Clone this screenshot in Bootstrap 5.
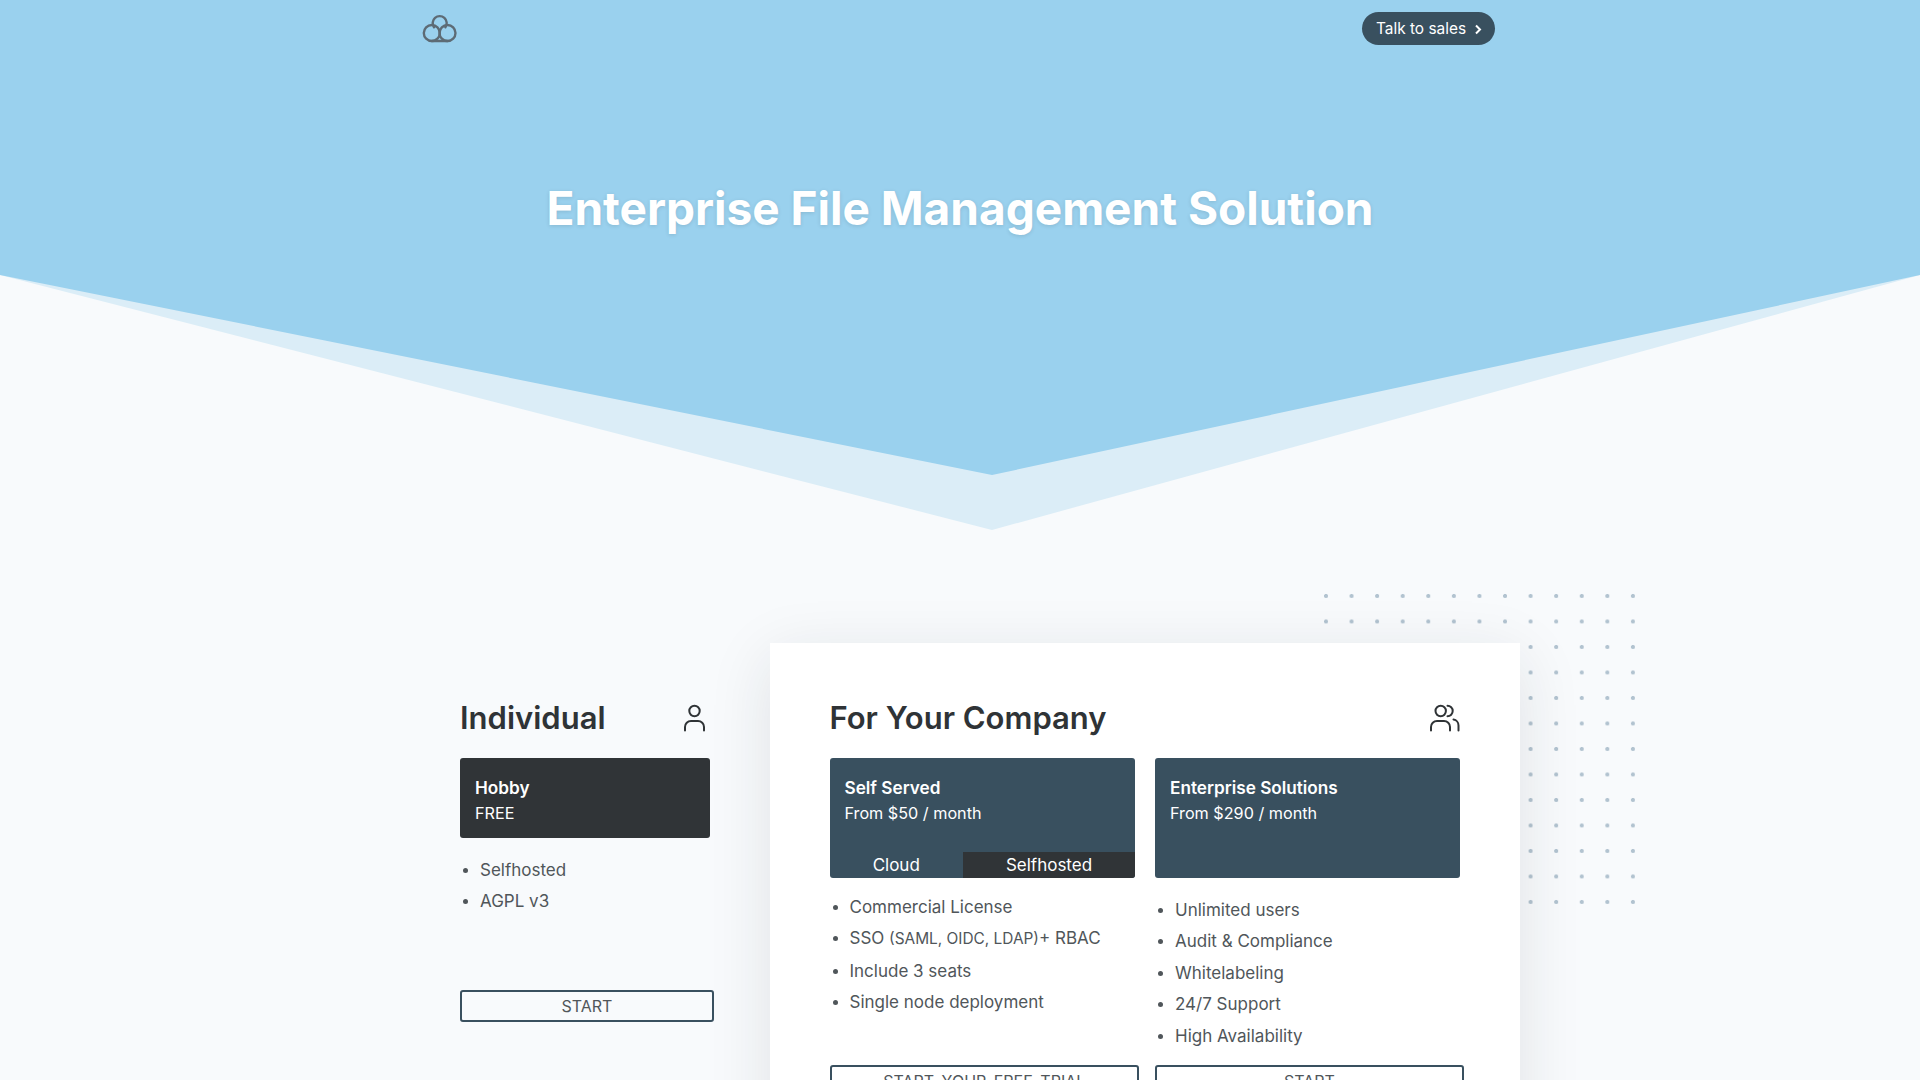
<!DOCTYPE html>
<html lang="en">
<head>
    <meta charset="UTF-8">
    <title>Enterprise File Management Solution</title>
    <link href="https://cdn.jsdelivr.net/npm/bootstrap@5.3.0/dist/css/bootstrap.min.css" rel="stylesheet">
    <style>
        body { background: #f8fafc; font-family: Inter, "Liberation Sans", sans-serif; color: #50565a; }
        .hero-wrap { height: 530px; }
        .hero-bg { position: absolute; top: 0; left: 0; width: 100%; height: 100%; }
        .hero-nav { width: 1073px; margin-left: 422px; padding-top: 12px; height: 45px; }
        .sales-btn { background: #39505f; color: #fff; font-size: 15.4px; height: 33px; padding: 1px 13px 0 14px; }
        .sales-btn:hover { background: #39505f; color: #fff; }
        .hero-title { color: #fff; font-size: 46px; font-weight: 700; margin: 0; padding-top: 136px; text-shadow: 0 1px 4px rgba(0, 0, 0, .12); }
        .plans-wrap { width: 1060px; margin-left: 460px; padding-top: 113px; }
        .dot-field { position: absolute; left: 1323px; top: 593px; width: 312px; height: 312px; background-image: radial-gradient(circle at 3px 3px, #b2c3d0 1.8px, transparent 2.3px); background-size: 25.58px 25.5px; }
        .solo-col { width: 250px; padding-top: 56px; }
        .company-panel { width: 750px; margin-left: 60px; padding: 56px 60px 30px 59.5px; box-shadow: 0 14px 60px rgba(30, 40, 50, .11); }
        .plan-head { height: 38px; margin-bottom: 21px; }
        .plan-head h2 { font-size: 31px; font-weight: 600; color: #2f3336; margin: 0; line-height: 38px; }
        .plan-head svg { fill: none; stroke: #2f3336; stroke-width: 2; stroke-linecap: round; }
        .plan-box { background: #39505f; color: #fff; font-size: 16.2px; line-height: 26px; padding: 17px 15px 12px; border-radius: 3px; }
        .plan-box b { font-size: 17.2px; font-weight: 600; display: block; margin-bottom: -1px; }
        .plan-box.dark { background: #303437; height: 80px; }
        .tall-box { height: 120px; }
        .tab-row { height: 26px; margin: auto -15px -12px; font-size: 17px; line-height: 26px; text-align: center; }
        .tab-cloud { width: 133.5px; }
        .tab-self { width: 172px; background: #303437; border-radius: 0 0 3px 0; }
        .plan-list { padding-left: 20px; margin: 0; font-size: 17px; line-height: 24px; }
        .plan-list li { margin-bottom: 7.4px; }
        .plan-list li::marker { font-size: 15px; }
        .plan-list small { font-size: 15.4px; }
        .plan-btn { display: block; width: calc(100% + 4px); height: 32px; padding: 0; font-size: 16px; line-height: 28px; word-spacing: 3px; color: #50565a; border: 2px solid #39505f; border-radius: 3px; background: transparent; }
        .solo-start { margin-top: 77px; }
        .split-row { gap: 20px; padding-bottom: 40px; }
        .col-split { width: 305.5px; }
        .top-list { margin-top: 17px; }
        .ent-list { margin-top: 20px; margin-bottom: 10px; }
    </style>
</head>
<body>
    <div class="position-relative hero-wrap">
        <svg class="hero-bg" viewBox="0 0 1920 530" preserveAspectRatio="none" aria-hidden="true">
            <polygon points="0,275 992,530 1920,275 1920,275" fill="#dbedf7"/>
            <polygon points="0,0 1920,0 1920,275 992,475 0,275" fill="#9ad1ee"/>
        </svg>
        <div class="position-relative">
            <div class="hero-nav d-flex justify-content-between align-items-start">
                <svg width="36" height="32" viewBox="0 0 36 32" fill="none" stroke="#5d6b75" stroke-width="2.4" stroke-linecap="round">
                    <circle cx="9.8" cy="21" r="8"/>
                    <circle cx="25.5" cy="21" r="8"/>
                    <path d="M12 15.2A7 7 0 1 1 23.4 15.2"/>
                    <path d="M9.8 29H25.5"/>
                </svg>
                <a href="#" class="btn sales-btn rounded-pill d-flex align-items-center gap-2 border-0">
                    Talk to sales
                    <svg width="8" height="11" viewBox="0 0 8 11" fill="none" stroke="#fff" stroke-width="2"><path d="M2 1.5 6 5.5 2 9.5"/></svg>
                </a>
            </div>
            <h1 class="hero-title text-center">Enterprise File Management Solution</h1>
        </div>
    </div>

    <div class="dot-field"></div>

    <div class="plans-wrap d-flex position-relative align-items-start">
        <div class="solo-col">
            <div class="plan-head d-flex justify-content-between align-items-center">
                <h2>Individual</h2>
                <svg width="27" height="28" viewBox="0 0 27 28">
                    <circle cx="11.5" cy="7" r="5.2"/>
                    <path d="M2 26.5V23a6 6 0 0 1 6-6h7a6 6 0 0 1 6 6v3.5"/>
                </svg>
            </div>
            <div class="plan-box dark">
                <b>Hobby</b>
                FREE
            </div>
            <ul class="plan-list mt-3 pt-1">
                <li>Selfhosted</li>
                <li>AGPL v3</li>
            </ul>
            <a href="#" class="btn plan-btn solo-start">START</a>
        </div>

        <div class="card company-panel border-0 rounded-0 bg-white">
            <div class="plan-head d-flex justify-content-between align-items-center">
                <h2>For Your Company</h2>
                <svg width="31" height="28" viewBox="0 0 31 28">
                    <circle cx="11.7" cy="7" r="5.2"/>
                    <path d="M18.5 1.8a5.2 5.2 0 0 1 0 10.4"/>
                    <path d="M2 26.5V23a6 6 0 0 1 6-6h7a6 6 0 0 1 6 6v3.5"/>
                    <path d="M24.5 15.5a6 6 0 0 1 5 6v5"/>
                </svg>
            </div>
            <div class="d-flex split-row">
                <div class="col-split d-flex flex-column">
                    <div class="plan-box tall-box d-flex flex-column">
                        <b>Self Served</b>
                        From $50 / month
                        <div class="tab-row d-flex">
                            <div class="tab-cloud">Cloud</div>
                            <div class="tab-self">Selfhosted</div>
                        </div>
                    </div>
                    <ul class="plan-list top-list">
                        <li>Commercial License</li>
                        <li>SSO <small>(SAML, OIDC, LDAP)</small>+ RBAC</li>
                        <li>Include 3 seats</li>
                        <li>Single node deployment</li>
                    </ul>
                    <a href="#" class="btn plan-btn mt-auto">START YOUR FREE TRIAL</a>
                </div>
                <div class="col-split d-flex flex-column">
                    <div class="plan-box tall-box">
                        <b>Enterprise Solutions</b>
                        From $290 / month
                    </div>
                    <ul class="plan-list ent-list">
                        <li>Unlimited users</li>
                        <li>Audit &amp; Compliance</li>
                        <li>Whitelabeling</li>
                        <li>24/7 Support</li>
                        <li>High Availability</li>
                    </ul>
                    <a href="#" class="btn plan-btn">START</a>
                </div>
            </div>
        </div>
    </div>
</body>
</html>
